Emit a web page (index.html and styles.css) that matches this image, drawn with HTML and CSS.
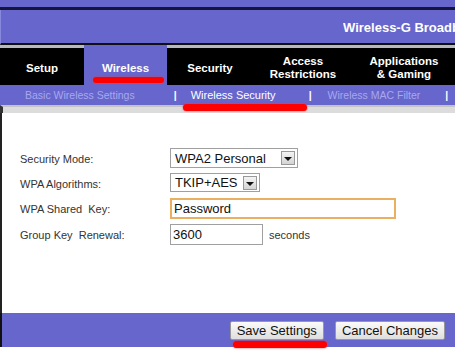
FILE: index.html
```html
<!DOCTYPE html>
<html lang="en">
<head>
  <meta charset="UTF-8">
  <title>Wireless Security</title>
  <link rel="stylesheet" href="styles.css">
</head>
<body>
  <div class="page">
    <div class="top-strip"></div>
    <div class="header"><span class="title">Wireless-G Broadband</span></div>
    <div class="tabs">
      <div class="tab">Setup</div>
      <div class="tab active">Wireless</div>
      <div class="tab">Security</div>
      <div class="tab">Access<br>Restrictions</div>
      <div class="tab">Applications<br>&amp; Gaming</div>
    </div>
    <div class="subnav">
      <span class="sub sub-basic">Basic Wireless Settings</span>
      <span class="sep sep-1">|</span>
      <span class="sub current">Wireless Security</span>
      <span class="sep sep-2">|</span>
      <span class="sub">Wireless MAC Filter</span>
      <span class="sep sep-3">|</span>
    </div>
    <div class="gray-band"></div>
    <div class="content">
      <div class="form">
        <label>Security Mode:</label>
        <div class="select wide"><span class="val">WPA2 Personal</span><span class="arrow"></span></div>
        <label>WPA Algorithms:</label>
        <div class="select narrow"><span class="val">TKIP+AES</span><span class="arrow"></span></div>
        <label>WPA Shared&nbsp; Key:</label>
        <div><input class="text key" type="text" value="Password"></div>
        <label>Group Key&nbsp; Renewal:</label>
        <div class="renewal"><input class="text short" type="text" value="3600"><span class="unit">seconds</span></div>
      </div>
    </div>
    <div class="footer">
      <button class="btn">Save Settings</button>
      <button class="btn">Cancel Changes</button>
    </div>
  </div>
  <!-- hand-drawn red marks -->
  <div class="mark mark-tab"></div>
  <div class="mark mark-sub"></div>
  <div class="mark mark-save"></div>
</body>
</html>
```

FILE: styles.css
```css
* { box-sizing: border-box; }
body { margin: 0; background: #fff; font-family: "Liberation Sans", Arial, sans-serif; position: relative; width: 455px; height: 356px; overflow: hidden; }
.page { width: 455px; }
.top-strip { height: 10px; background: #6666cc; border-bottom: 3px solid #16163a; }
.header { height: 35px; background: #6666cc; color: #fff; font-weight: bold; font-size: 13px; padding: 10px 0 0 342px; white-space: nowrap; border-left: 1px solid #8888dd; border-bottom: 2px solid #111; }
.title { display: inline-block; width: 113px; overflow: hidden; vertical-align: top; }
.tabs { display: grid; grid-template-columns: 84px 83px 86px 100px 102px; height: 40px; background: #000; }
.tab { display: flex; align-items: center; justify-content: center; text-align: center; color: #fff; font-weight: bold; font-size: 11.5px; line-height: 13px; border-top: 3px solid #b8b8c0; padding-top: 3px; }
.tab.active { background: #6666cc; border-top-color: #6666cc; }
.subnav { height: 20px; background: #6666cc; display: flex; align-items: center; font-size: 10.5px; white-space: nowrap; }
.sub { color: #a8a8ee; }
.sub-basic { margin-left: 25px; }
.sub.current { color: #fff; font-size: 11px; }
.sep { color: #fff; font-weight: bold; }
.sep-1 { margin: 0 14px 0 39px; }
.sep-2 { margin: 0 16px 0 33px; }
.sep-3 { margin-left: 25px; }
.gray-band { height: 8px; background: #dcdcdc; border-top: 2px solid #c4c4c4; border-left: 3px solid #333; }
.content { height: 200px; border-left: 2px solid #222; padding: 35px 0 0 18px; }
.form { display: grid; grid-template-columns: 150px auto; grid-template-rows: 25px 25px 26px 21px; align-items: start; }
.form label { font-size: 11px; color: #333; padding-top: 5px; }
.select { display: inline-flex; align-items: center; height: 20px; border: 1px solid #a0a0a0; background: #fff; font-size: 13px; color: #111; justify-self: start; padding-left: 4px; white-space: nowrap; }
.select .val { flex: 1; }
.select.wide { width: 128px; }
.select.narrow { width: 90px; height: 19px; }
.arrow { width: 14px; height: 14px; margin: 0 2px 0 4px; background: linear-gradient(#f4f4f4, #d4d4d4); border: 1px solid #999; position: relative; flex: none; }
.arrow::after { content: ""; position: absolute; left: 2px; top: 5px; border-left: 4px solid transparent; border-right: 4px solid transparent; border-top: 4px solid #111; }
.text { font-family: "Liberation Sans", Arial, sans-serif; font-size: 13px; color: #111; height: 21px; padding: 1px 2px; border: 1px solid #a0a0a0; outline: none; }
.key { width: 226px; border: 2px solid #e8b060; }
.short { width: 93px; }
.renewal { display: flex; align-items: center; }
.unit { font-size: 11px; color: #333; margin-left: 6px; }
.footer { height: 34px; background: #6666cc; border-left: 2px solid #111; display: flex; justify-content: flex-end; align-items: center; gap: 11px; padding: 0 10px 0 0; }
.btn { font-family: "Liberation Sans", Arial, sans-serif; font-size: 13px; color: #111; height: 19px; padding: 0 6px; background: linear-gradient(#fafafa, #dedede); border: 1px solid #999; border-radius: 2px; }
.mark { position: absolute; background: #f00; border-radius: 6px; box-shadow: 0 0 2px #f33; }
.mark-tab { left: 93px; top: 77px; width: 71px; height: 6px; }
.mark-sub { left: 183px; top: 104px; width: 124px; height: 7px; }
.mark-save { left: 233px; top: 341px; width: 94px; height: 7px; }
```
